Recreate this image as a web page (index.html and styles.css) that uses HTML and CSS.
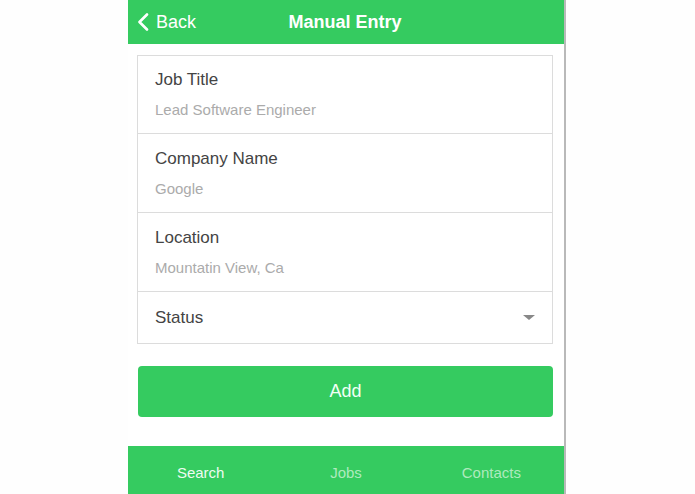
FILE: index.html
```html
<!DOCTYPE html>
<html>
<head>
<meta charset="utf-8">
<link rel="stylesheet" href="styles.css">
</head>
<body>
<div class="stage">
  <div class="app">
    <header class="topbar">
      <div class="back">
        <svg class="chev" width="12" height="18" viewBox="0 0 12 18"><path d="M10 1.5 L2.5 9 L10 16.5" fill="none" stroke="#fff" stroke-width="2.6" stroke-linecap="round" stroke-linejoin="round"/></svg>
        <span>Back</span>
      </div>
      <div class="title">Manual Entry</div>
    </header>
    <main class="content">
      <div class="form">
        <div class="field">
          <div class="label">Job Title</div>
          <div class="placeholder">Lead Software Engineer</div>
        </div>
        <div class="field">
          <div class="label">Company Name</div>
          <div class="placeholder">Google</div>
        </div>
        <div class="field">
          <div class="label">Location</div>
          <div class="placeholder">Mountatin View, Ca</div>
        </div>
        <div class="field select">
          <div class="label">Status</div>
          <span class="caret"></span>
        </div>
      </div>
      <button class="add">Add</button>
    </main>
    <nav class="tabs">
      <div class="tab active">Search</div>
      <div class="tab">Jobs</div>
      <div class="tab">Contacts</div>
    </nav>
  </div>
  <div class="rest"></div>
</div>
</body>
</html>
```
FILE: styles.css
```css
html, body {
  margin: 0;
  padding: 0;
  background: #fefefe;
  font-family: "Liberation Sans", Arial, sans-serif;
}
.stage {
  display: flex;
  height: 494px;
  padding-left: 128px;
}
.app {
  width: 436px;
  height: 494px;
  display: flex;
  flex-direction: column;
  background: #fff;
  border-right: 2px solid #b9b9b9;
}
.rest {
  flex: 1;
}
.topbar {
  height: 44px;
  flex-shrink: 0;
  background: #35cb60;
  position: relative;
  display: flex;
  align-items: center;
  justify-content: center;
  color: #fff;
}
.back {
  position: absolute;
  left: 9px;
  top: 0;
  height: 44px;
  display: flex;
  align-items: center;
  gap: 7px;
  font-size: 18px;
}
.title {
  font-size: 18px;
  font-weight: bold;
  margin-right: 2px;
}
.content {
  flex: 1;
  padding: 11px 11px 0 9px;
}
.form {
  border: 1px solid #dcdcdc;
}
.field {
  height: 79px;
  border-top: 1px solid #dcdcdc;
  padding: 14px 17px 0 17px;
  box-sizing: border-box;
}
.field:first-child {
  border-top: none;
  height: 77px;
  padding-top: 13px;
}
.label {
  font-size: 17px;
  color: #444;
  line-height: 22px;
}
.placeholder {
  font-size: 15px;
  color: #ababab;
  margin-top: 10px;
  line-height: 18px;
}
.field.select {
  height: 52px;
  padding-top: 0;
  display: flex;
  align-items: center;
  justify-content: space-between;
}
.caret {
  width: 0;
  height: 0;
  border-left: 6px solid transparent;
  border-right: 6px solid transparent;
  border-top: 5px solid #888;
}
.add {
  display: block;
  width: 415px;
  height: 51px;
  margin: 22px 0 0 1px;
  background: #35cb60;
  border: none;
  border-radius: 4px;
  color: #f2fff5;
  font-family: "Liberation Sans", Arial, sans-serif;
  font-size: 18px;
}
.tabs {
  height: 48px;
  flex-shrink: 0;
  background: #35cb60;
  display: flex;
}
.tab {
  flex: 1;
  display: flex;
  align-items: center;
  justify-content: center;
  font-size: 15px;
  color: #aeeabe;
  padding-top: 4px;
}
.tab.active {
  color: #eefbf1;
}
```
